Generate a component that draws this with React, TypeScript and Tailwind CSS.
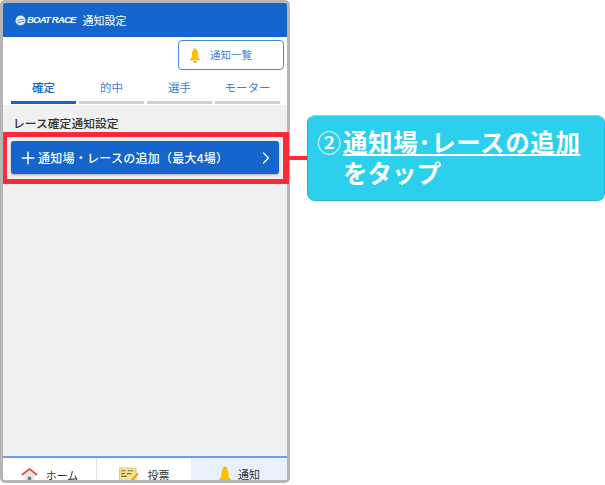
import { ChevronRight, Plus } from "lucide-react";

const font = { fontFamily: '"Noto Sans CJK JP", "Liberation Sans", sans-serif' };

function Bell({ className }: { className: string }) {
    return (
        <svg viewBox="0 0 20 24" className={className}>
            <circle cx="10" cy="2.500" r="2.500" fill="#f5a800" />
            <path d="M10 2C6 2 5 6 5 10c0 4-1 7-4 9v1h18v-1c-3-2-4-5-4-9 0-4-1-8-5-8z" fill="#fdbf00" />
            <path d="M7 21h6c0 2-1.500 3-3 3s-3-1-3-3z" fill="#f09a00" />
        </svg>
    );
}

function Home() {
    return (
        <svg viewBox="0 0 20 18" className="w-[17px] h-[16px] shrink-0">
            <path d="M4 9l6-5 6 5v9H4z" fill="#e8e8e8" />
            <path d="M1 9l9-7 9 7" fill="none" stroke="#e2483d" strokeWidth="2" />
            <rect x="8" y="11" width="4" height="7" fill="#777" />
        </svg>
    );
}

function Ticket() {
    return (
        <svg viewBox="0 0 22 16" className="w-[21px] h-[15px] shrink-0">
            <rect x="0" y="1" width="18" height="14" fill="#f8e48f" stroke="#c9b868" strokeWidth="0.7" />
            <path d="M2 4h5M9 4h6M2 7h4M8 7h5M2 10h6" stroke="#77704a" strokeWidth="1.200" />
            <path d="M12 14l7-8 2 1.500-7 8z" fill="#e8a51f" />
        </svg>
    );
}

export default function App() {
    const tabs = ["確定", "的中", "選手", "モーター"];

    return (
        <div className="w-[605px] h-[485px] bg-white flex overflow-hidden" style={font}>
            <div className="w-[290px] h-[483px] shrink-0 border-[3px] border-[#b5b5b5] rounded-[5px] flex flex-col bg-[#f0f0f0]">
                <div className="h-[34px] shrink-0 bg-[#1565cc] rounded-t-[2px] flex items-center pl-[12px] gap-[7px] text-white">
                    <div className="flex items-center gap-[1px]">
                        <svg viewBox="0 0 12 12" className="w-[11px] h-[11px]">
                            <circle cx="6" cy="6" r="5.500" fill="#dfeaf8" />
                            <path d="M2 7c2-2 5-3 8-2M3 9c2-1 4-2 7-2" stroke="#1565cc" strokeWidth="0.8" fill="none" />
                        </svg>
                        <span className="text-[9.500px] font-bold italic leading-none tracking-[-0.8px]" style={{ fontFamily: '"Liberation Sans", sans-serif' }}>BOAT RACE</span>
                    </div>
                    <span className="text-[11px] leading-none">通知設定</span>
                </div>
                <div className="bg-white shrink-0 h-[68px] flex flex-col">
                    <div className="flex justify-end pt-[3px] pr-[3px]">
                        <div className="w-[106px] h-[30px] border border-[#4a86d6] rounded-[4px] flex items-center pl-[10px] gap-[9px]">
                            <Bell className="w-[12px] h-[15px]" />
                            <span className="text-[10.500px] text-[#3f7fcb]">通知一覧</span>
                        </div>
                    </div>
                    <div className="flex pl-[8px] pr-[7px] gap-[3px] mt-auto mb-[1px]">
                        {tabs.map((t, i) => (
                            <div key={t} className={`flex-1 h-[28px] pb-[2px] flex items-center justify-center text-[11.500px] border-b-[3px] ${i === 0 ? "border-[#1565cc] text-[#1565cc] font-medium" : "border-[#cfcfcf] text-[#3f7fcb]"}`}>
                                {t}
                            </div>
                        ))}
                    </div>
                </div>
                <div className="flex-1 flex flex-col">
                    <div className="h-[27px] shrink-0 flex items-end pl-[10px] pb-[3px] text-[11.800px] text-[#333] leading-none font-medium">レース確定通知設定</div>
                    <div className="h-[52px] shrink-0 mr-[-2px] border-[5px] border-l-[4px] border-r-[6px] border-[#ff2a36] pl-[4px] pr-[4px] pt-[4px]">
                        <div className="h-[33px] bg-[#1565cc] rounded-[3px] flex items-center text-white pl-[7px] pr-[3px] shadow-[0_1px_2px_rgba(0,0,0,0.3)]">
                            <Plus className="w-[20px] h-[20px] shrink-0" strokeWidth={1.800} />
                            <span className="text-[12px] tracking-[0.25px] font-medium flex-1 whitespace-nowrap">通知場・レースの追加（最大4場）</span>
                            <ChevronRight className="w-[20px] h-[20px] shrink-0" strokeWidth={1.600} />
                        </div>
                    </div>
                    <div className="flex-1" />
                </div>
                <div className="h-[24px] shrink-0 bg-white border-t-[2px] border-[#6a9fe0] flex text-[11px] text-[#333] overflow-hidden rounded-b-[2px]">
                    <div className="w-[94px] border-r border-[#e2e2e2] flex items-start justify-center gap-[8px] pt-[9px]">
                        <Home />
                        <span className="leading-[16px]">ホーム</span>
                    </div>
                    <div className="w-[94px] flex items-start justify-center gap-[8px] pt-[9px]">
                        <Ticket />
                        <span className="leading-[16px]">投票</span>
                    </div>
                    <div className="flex-1 bg-[#e8f0fb] flex items-start justify-center gap-[6px] pt-[8px]">
                        <Bell className="w-[14px] h-[18px]" />
                        <span className="leading-[16px]">通知</span>
                    </div>
                </div>
            </div>
            <div className="flex-1 pt-[115px] flex items-start ml-[-1px]">
                <div className="w-[18px] h-[4px] bg-[#ff2a36] mt-[41px] shrink-0" />
                <div className="w-[298px] h-[86px] rounded-[8px] bg-[#2dd0ec] border border-[#22b4d8] border-t-[#7fdff2] text-white font-bold pl-[9px] pt-[10px] text-[24.500px] leading-[31px] shrink-0">
                    <div className="flex whitespace-nowrap">
                        <span className="w-[26px] text-[24px] font-medium">②</span>
                        <span className="underline underline-offset-[2px] decoration-[1.500px] tracking-[0.6px]">通知場･レースの追加</span>
                    </div>
                    <div className="pl-[26px]">をタップ</div>
                </div>
            </div>
        </div>
    );
}
